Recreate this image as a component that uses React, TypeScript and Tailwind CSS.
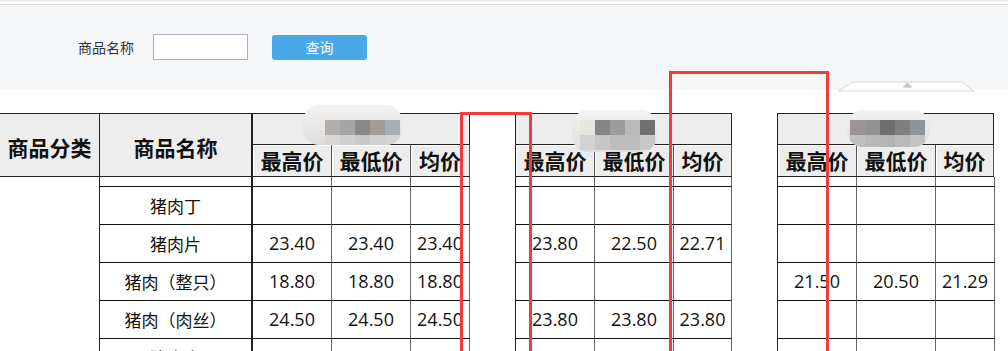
import React from 'react'

type Row = { name: string; g1: string[]; g2: string[]; g3: string[] }

const empty = ['', '', '']

const rows: Row[] = [
  { name: '猪肉（块）', g1: empty, g2: empty, g3: empty },
  { name: '猪肉丁', g1: empty, g2: empty, g3: empty },
  { name: '猪肉片', g1: ['23.40', '23.40', '23.40'], g2: ['23.80', '22.50', '22.71'], g3: empty },
  { name: '猪肉（整只）', g1: ['18.80', '18.80', '18.80'], g2: empty, g3: ['21.50', '20.50', '21.29'] },
  { name: '猪肉（肉丝）', g1: ['24.50', '24.50', '24.50'], g2: ['23.80', '23.80', '23.80'], g3: empty },
  { name: '猪肉末', g1: empty, g2: empty, g3: empty },
]

const font = { fontFamily: '"Noto Sans CJK SC", "Noto Sans", sans-serif' }

// pixelated blur over the group names
function Blob({ className, top, bottom, offset }: { className: string; top: string[]; bottom: string[]; offset: string }) {
  return (
    <div className={`absolute overflow-hidden rounded-[16px] bg-gradient-to-b from-[#f2f2f2] to-[#dedede] ${className}`}>
      <div className={`flex flex-col ${offset}`}>
        <div className="flex">
          {top.map((c, i) => (
            <div key={i} className="h-[15px] w-[15px]" style={{ background: c }} />
          ))}
        </div>
        <div className="flex">
          {bottom.map((c, i) => (
            <div key={i} className="h-[15px] w-[15px]" style={{ background: c }} />
          ))}
        </div>
      </div>
    </div>
  )
}

function GroupHeader({ first }: { first: boolean }) {
  const cell = 'flex items-center justify-center border-r border-[#555] bg-[#ededed] shadow-[inset_1px_1px_0_#fff] text-[21px] font-bold text-[#111]'
  return (
    <div className={`flex flex-col ${first ? 'w-[217px]' : 'w-[217px] border-l border-[#222]'}`}>
      <div className="h-[32px] border-y border-r border-[#222] bg-[#ededed]" />
      <div className="flex h-[32px] border-b border-[#222]">
        <div className={`${cell} w-[79px]`}>最高价</div>
        <div className={`${cell} w-[79px]`}>最低价</div>
        <div className={`${cell} ${first ? 'w-[59px]' : 'w-[58px]'}`}>均价</div>
      </div>
    </div>
  )
}

function GroupCells({ vals, first, last }: { vals: string[]; first?: boolean; last?: boolean }) {
  const cell = 'flex items-center justify-center border-r border-b border-r-[#666] border-b-[#111] font-["Open_Sans",sans-serif] text-[18px] text-[#111]'
  return (
    <div className={`flex ${first ? '' : 'border-l border-[#222]'}`}>
      <div className={`${cell} w-[79px]`}>{vals[0]}</div>
      <div className={`${cell} w-[79px]`}>{vals[1]}</div>
      <div className={`${cell} ${last ? 'w-[59px]' : first ? 'w-[59px]' : 'w-[58px]'}`}>{vals[2]}</div>
    </div>
  )
}

export default function App() {
  return (
    <div className="relative h-[351px] w-[1008px] overflow-hidden bg-white" style={font}>
      {/* search bar */}
      <div className="h-[2px] bg-[#efefef]" />
      <div className="h-[2px] bg-white" />
      <div className="h-[1px] bg-[#dcdcdc]" />
      <div className="flex h-[85px] items-start bg-[#f5f6f8] pl-[78px] pt-[29px]">
        <div className="flex h-[26px] items-center">
          <span className="text-[14px] text-[#333]">商品名称</span>
          <input className="ml-[19px] h-[26px] w-[95px] border border-[#aab0c4] bg-white outline-none" />
          <button className="ml-[24px] h-[25px] w-[95px] rounded-[3px] bg-[#4aa8e9] text-[14px] text-white">查询</button>
        </div>
      </div>

      <svg className="absolute left-[838px] top-[81px]" width="137" height="11" viewBox="0 0 137 11">
        <polygon points="0.5,10 15,1 124,1 135.5,10" fill="#fff" stroke="#d6d6d6" strokeWidth="1" />
        <polygon points="69.5,1.5 74.5,6.5 64.5,6.5" fill="#c4c4c4" />
      </svg>

      {/* table */}
      <div className="mt-[23px] flex flex-col">
        <div className="flex">
          <div className="flex h-[64px] w-[100px] items-center justify-center border-y border-r border-[#222] bg-[#ededed] pt-[5px] text-[21px] font-bold text-[#111]">
            商品分类
          </div>
          <div className="flex h-[64px] w-[153px] items-center justify-center border-y border-r-2 border-[#222] bg-[#ededed] pt-[5px] text-[21px] font-bold text-[#111]">
            商品名称
          </div>
          <GroupHeader first />
          <div className="w-[45px]" />
          <GroupHeader first={false} />
          <div className="w-[45px]" />
          <GroupHeader first={false} />
        </div>

        <div className="h-[200px] overflow-hidden">
          <div className="-mt-[28px] flex flex-col">
            {rows.map((r, i) => (
              <div key={i} className="flex h-[38px]">
                <div className="w-[100px] border-r border-[#222]" />
                <div className="flex w-[153px] items-center justify-center border-r-2 border-b border-r-[#222] border-b-[#111] text-[17px] text-[#111]">
                  {r.name}
                </div>
                <GroupCells vals={r.g1} first />
                <div className="w-[45px]" />
                <GroupCells vals={r.g2} />
                <div className="w-[45px]" />
                <GroupCells vals={r.g3} last />
              </div>
            ))}
          </div>
        </div>
      </div>

      <Blob
        className="left-[303px] top-[105px] h-[40px] w-[99px]"
        offset="ml-[22px] mt-[15px]"
        top={['#b5afab', '#a2a6a8', '#888888', '#a39c98', '#a6aeb1']}
        bottom={['#d8d8d8', '#cfcfcf', '#c8c8c8', '#d0d0d0', '#d4d4d4']}
      />
      <Blob
        className="left-[572px] top-[110px] h-[42px] w-[85px]"
        offset="ml-[8px] mt-[10px]"
        top={['#e8e4e0', '#858585', '#9a9c9e', '#bbb9b7', '#6f716f']}
        bottom={['#d2d2d2', '#c6c6c6', '#bdbdbd', '#bcbcbc', '#c8c8c8']}
      />
      <Blob
        className="left-[847px] top-[110px] h-[37px] w-[83px]"
        offset="ml-[3px] mt-[10px]"
        top={['#9a9593', '#8f9395', '#6f6d6f', '#7f7f7d', '#90959a']}
        bottom={['#bfbfbf', '#b8b8b8', '#b4b4b4', '#bababa', '#c2c2c2']}
      />

      {/* red annotation boxes */}
      <div className="absolute left-[460px] top-[112px] h-[260px] w-[72px] border-[3px] border-b-0 border-[#f23b3b]" />
      <div className="absolute left-[669px] top-[71px] h-[300px] w-[160px] border-[3px] border-b-0 border-[#f23b3b]" />
    </div>
  )
}
